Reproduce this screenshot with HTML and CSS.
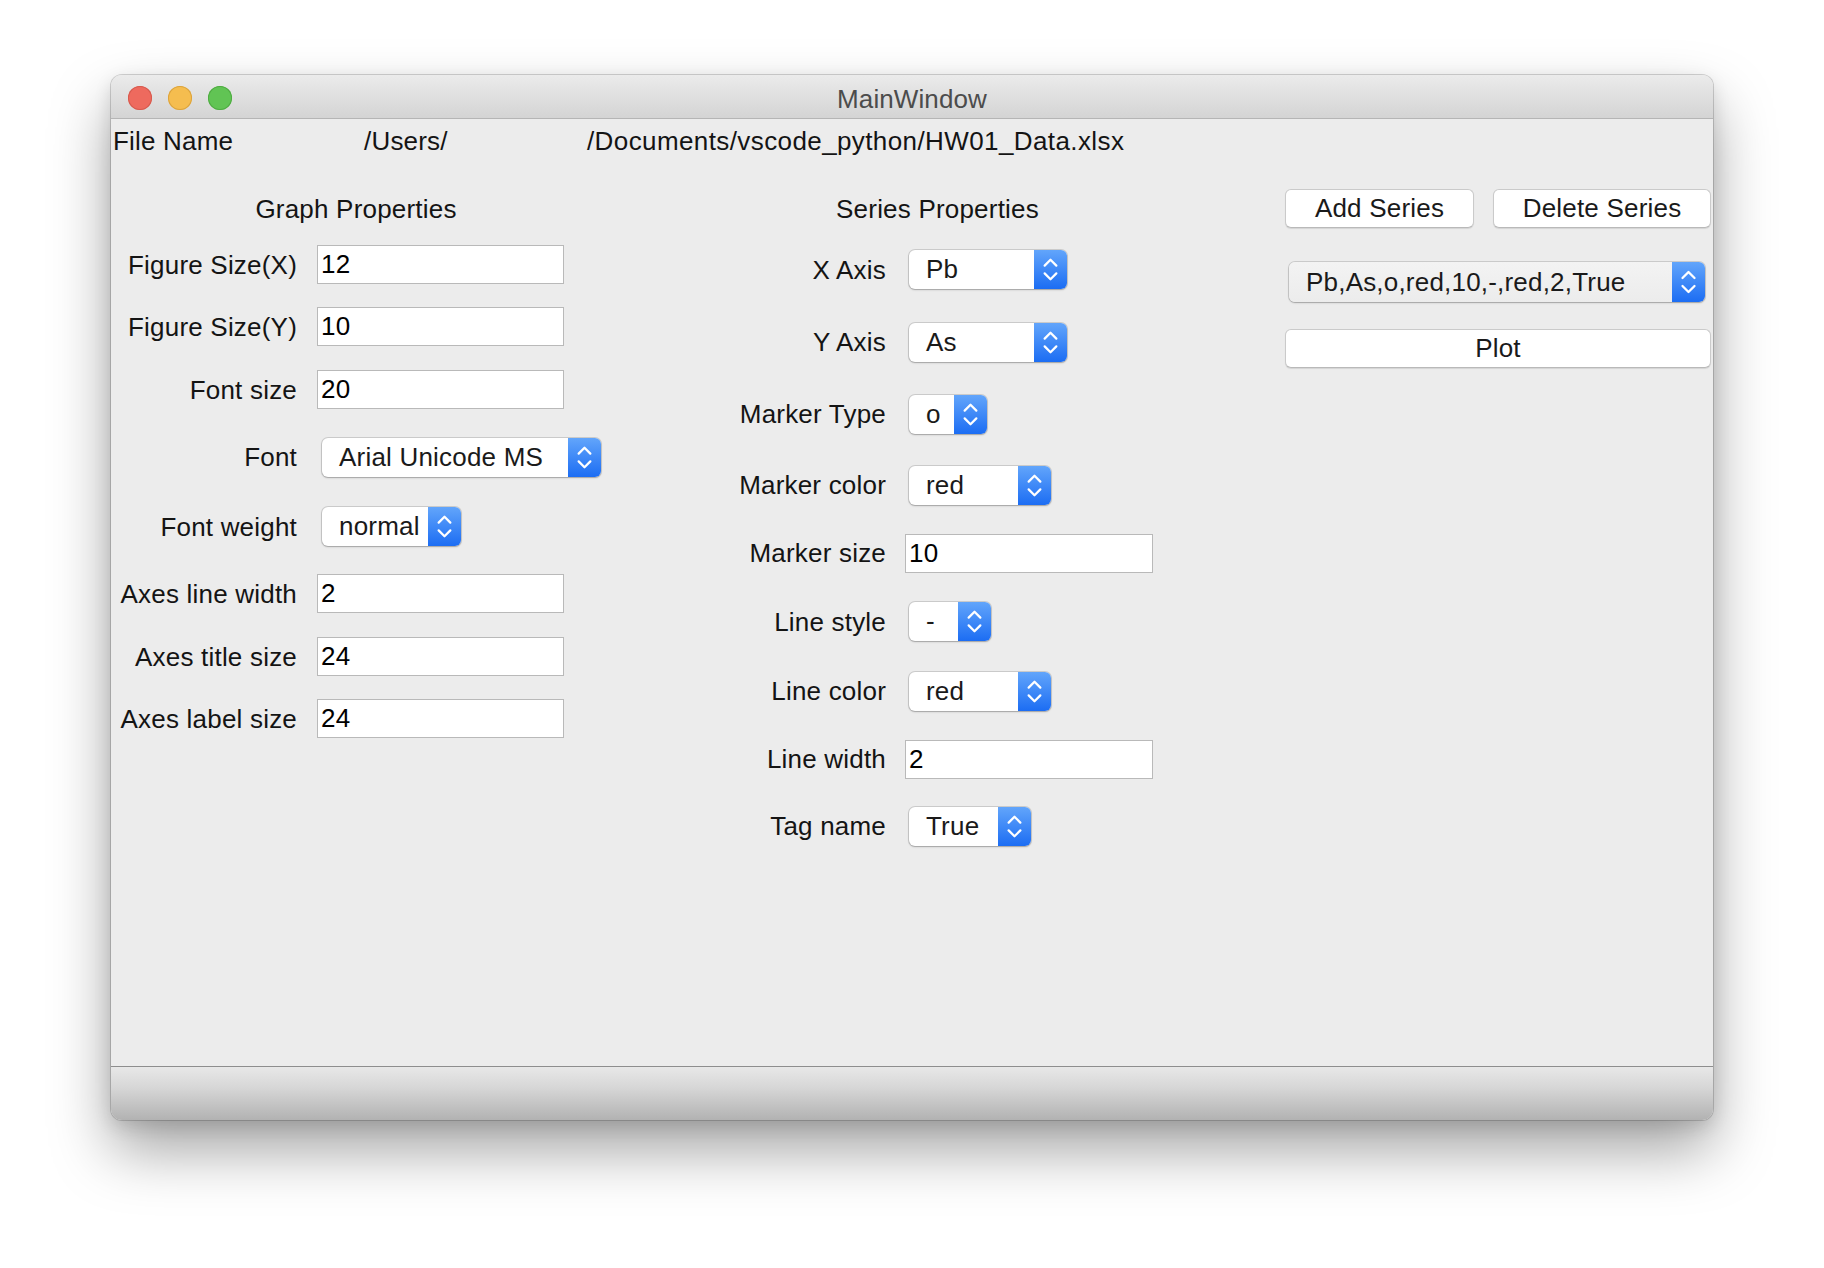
FILE: index.html
```html
<!DOCTYPE html>
<html lang="en">
<head>
<meta charset="utf-8">
<title>MainWindow</title>
<link rel="stylesheet" href="styles.css">
</head>
<body>
<div class="window">
  <div class="titlebar">
    <div class="lights">
      <span class="light light-red"></span>
      <span class="light light-yellow"></span>
      <span class="light light-green"></span>
    </div>
    <div class="title">MainWindow</div>
    <div></div>
  </div>

  <div class="main">
    <div class="filerow">
      <span class="file-label">File Name</span>
      <span class="file-user">/Users/</span>
      <span class="file-path">/Documents/vscode_python/HW01_Data.xlsx</span>
    </div>

    <div class="columns">
      <section class="col col-graph">
        <h2 class="heading">Graph Properties</h2>
        <div class="form form-graph">
          <label class="lbl">Figure Size(X)</label><div class="edit">12</div>
          <label class="lbl">Figure Size(Y)</label><div class="edit">10</div>
          <label class="lbl">Font size</label><div class="edit">20</div>
          <label class="lbl">Font</label>
          <div class="combo combo-font"><span class="combo-text">Arial Unicode MS</span><span class="combo-btn"><svg class="chev" viewBox="0 0 33 40"><path d="M10.5 16 L16.5 10 L22.5 16 M10.5 24 L16.5 30 L22.5 24"/></svg></span></div>
          <label class="lbl">Font weight</label>
          <div class="combo combo-weight"><span class="combo-text">normal</span><span class="combo-btn"><svg class="chev" viewBox="0 0 33 40"><path d="M10.5 16 L16.5 10 L22.5 16 M10.5 24 L16.5 30 L22.5 24"/></svg></span></div>
          <label class="lbl">Axes line width</label><div class="edit">2</div>
          <label class="lbl">Axes title size</label><div class="edit">24</div>
          <label class="lbl">Axes label size</label><div class="edit">24</div>
        </div>
      </section>

      <section class="col col-series">
        <h2 class="heading">Series Properties</h2>
        <div class="form form-series">
          <label class="lbl">X Axis</label>
          <div class="combo combo-axis"><span class="combo-text">Pb</span><span class="combo-btn"><svg class="chev" viewBox="0 0 33 40"><path d="M10.5 16 L16.5 10 L22.5 16 M10.5 24 L16.5 30 L22.5 24"/></svg></span></div>
          <label class="lbl">Y Axis</label>
          <div class="combo combo-axis"><span class="combo-text">As</span><span class="combo-btn"><svg class="chev" viewBox="0 0 33 40"><path d="M10.5 16 L16.5 10 L22.5 16 M10.5 24 L16.5 30 L22.5 24"/></svg></span></div>
          <label class="lbl">Marker Type</label>
          <div class="combo combo-marker"><span class="combo-text">o</span><span class="combo-btn"><svg class="chev" viewBox="0 0 33 40"><path d="M10.5 16 L16.5 10 L22.5 16 M10.5 24 L16.5 30 L22.5 24"/></svg></span></div>
          <label class="lbl">Marker color</label>
          <div class="combo combo-color"><span class="combo-text">red</span><span class="combo-btn"><svg class="chev" viewBox="0 0 33 40"><path d="M10.5 16 L16.5 10 L22.5 16 M10.5 24 L16.5 30 L22.5 24"/></svg></span></div>
          <label class="lbl">Marker size</label><div class="edit">10</div>
          <label class="lbl">Line style</label>
          <div class="combo combo-style"><span class="combo-text">-</span><span class="combo-btn"><svg class="chev" viewBox="0 0 33 40"><path d="M10.5 16 L16.5 10 L22.5 16 M10.5 24 L16.5 30 L22.5 24"/></svg></span></div>
          <label class="lbl">Line color</label>
          <div class="combo combo-color"><span class="combo-text">red</span><span class="combo-btn"><svg class="chev" viewBox="0 0 33 40"><path d="M10.5 16 L16.5 10 L22.5 16 M10.5 24 L16.5 30 L22.5 24"/></svg></span></div>
          <label class="lbl">Line width</label><div class="edit">2</div>
          <label class="lbl">Tag name</label>
          <div class="combo combo-tag"><span class="combo-text">True</span><span class="combo-btn"><svg class="chev" viewBox="0 0 33 40"><path d="M10.5 16 L16.5 10 L22.5 16 M10.5 24 L16.5 30 L22.5 24"/></svg></span></div>
        </div>
      </section>

      <section class="col col-actions">
        <div class="btn-row">
          <div class="btn btn-add">Add Series</div>
          <div class="btn btn-delete">Delete Series</div>
        </div>
        <div class="combo combo-series"><span class="combo-text">Pb,As,o,red,10,-,red,2,True</span><span class="combo-btn"><svg class="chev" viewBox="0 0 33 40"><path d="M10.5 16 L16.5 10 L22.5 16 M10.5 24 L16.5 30 L22.5 24"/></svg></span></div>
        <div class="btn btn-plot">Plot</div>
      </section>
    </div>
  </div>

  <div class="statusbar"></div>
</div>
</body>
</html>
```

FILE: styles.css
```css
* { box-sizing: border-box; }

html, body {
  margin: 0;
  padding: 0;
  background: #ffffff;
}

body {
  width: 1824px;
  height: 1268px;
  overflow: hidden;
  font-family: "Liberation Sans", Arial, sans-serif;
  font-size: 26px;
  letter-spacing: 0.2px;
  color: #141414;
}

.window {
  margin: 75px 0 0 111px;
  width: 1602px;
  height: 1045px;
  display: flex;
  flex-direction: column;
  background: #ececec;
  border-radius: 11px;
  overflow: hidden;
  box-shadow:
    0 0 0 1px rgba(0, 0, 0, 0.16),
    0 30px 60px rgba(0, 0, 0, 0.36),
    0 6px 18px rgba(0, 0, 0, 0.12);
}

/* title bar */
.titlebar {
  flex: none;
  height: 44px;
  display: grid;
  grid-template-columns: 1fr auto 1fr;
  align-items: center;
  background: linear-gradient(#ebebeb, #d4d4d4);
  border-bottom: 1px solid #b5b5b5;
}

.lights {
  display: flex;
  gap: 16px;
  padding-left: 17px;
}

.light {
  width: 24px;
  height: 24px;
  border-radius: 50%;
}

.light-red { background: #ee6a5e; box-shadow: inset 0 0 0 1px #d65a4e; }
.light-yellow { background: #f5bd4f; box-shadow: inset 0 0 0 1px #dba33d; }
.light-green { background: #61c454; box-shadow: inset 0 0 0 1px #4fab42; }

.title {
  color: #4c4c4c;
  line-height: 44px;
  padding-top: 2px;
  letter-spacing: 0.1px;
}

/* main area */
.main {
  flex: 1;
  padding-top: 6px;
}

.filerow {
  display: flex;
  height: 32px;
  line-height: 32px;
  padding-left: 2px;
  white-space: nowrap;
}

.file-label { width: 251px; }
.file-user { width: 223px; }
.file-path { letter-spacing: 0.4px; }

.columns {
  display: flex;
  align-items: flex-start;
  margin-top: 32px;
}

.col-graph { width: 490px; }
.col-series { width: 435px; margin-left: 119px; }
.col-actions { width: 426px; margin-left: 130px; }

.heading {
  margin: 0 0 8.5px;
  padding-top: 4px;
  height: 36px;
  line-height: 32px;
  font-size: 26px;
  font-weight: normal;
  text-align: center;
  white-space: nowrap;
}

.form {
  display: grid;
  align-items: center;
}

.form-graph {
  grid-template-columns: 186px 1fr;
  column-gap: 20px;
  grid-template-rows: 62px 62px 64.75px 69.75px 69.5px 64.5px 61.75px 61.5px;
}

.form-series {
  grid-template-columns: 166px 1fr;
  column-gap: 19px;
  grid-template-rows: 72.5px 72px 72.25px 69.5px 67px 69.75px 69px 67px 67.5px;
}

.lbl {
  text-align: right;
  line-height: 32px;
  white-space: nowrap;
}

/* line edits */
.edit {
  height: 39px;
  background: #ffffff;
  border: 1px solid #b9b9b9;
  padding-left: 3px;
  line-height: 37px;
  color: #000;
}

.form-graph .edit { width: 247px; }
.form-series .edit { width: 248px; }

/* combo boxes */
.combo {
  display: flex;
  height: 39px;
  background: #ffffff;
  border-radius: 6px;
  box-shadow:
    0 0 0 1px rgba(0, 0, 0, 0.13),
    0 1px 2px rgba(0, 0, 0, 0.22);
}

.form .combo { justify-self: start; }
.form-graph .combo { margin-left: 5px; }
.form-series .combo { margin-left: 4px; }

.combo-text {
  flex: 1;
  padding-left: 17px;
  line-height: 39px;
  white-space: nowrap;
  overflow: hidden;
  color: #1a1a1a;
}

.combo-btn {
  flex: none;
  width: 33px;
  height: 100%;
  border-radius: 0 6px 6px 0;
  background: linear-gradient(#62a5fb, #1c6df3);
  display: flex;
}

.chev {
  width: 33px;
  height: 39px;
  fill: none;
  stroke: #ffffff;
  stroke-width: 2.3;
  stroke-linecap: round;
  stroke-linejoin: round;
}

.combo-font { width: 279px; }
.combo-weight { width: 139px; }
.combo-axis { width: 158px; }
.combo-marker { width: 78px; }
.combo-color { width: 142px; }
.combo-style { width: 82px; }
.combo-tag { width: 122px; }

.combo-series {
  width: 416px;
  height: 40px;
  margin: 34px 4px 0;
  background: linear-gradient(#f3f3f3, #ececec);
}

.combo-series .combo-text { line-height: 40px; }
.combo-series .chev { height: 40px; }

/* push buttons */
.btn-row {
  display: flex;
  gap: 19px;
}

.btn {
  height: 39px;
  background: #ffffff;
  border: 1px solid #cacaca;
  border-bottom-color: #b9b9b9;
  border-radius: 6px;
  box-shadow: 0 1px 1px rgba(0, 0, 0, 0.1);
  text-align: center;
  line-height: 37px;
  color: #1a1a1a;
  white-space: nowrap;
}

.btn-add { width: 189px; }
.btn-delete { width: 218px; }
.btn-plot { margin-top: 27px; }

/* bottom bar */
.statusbar {
  flex: none;
  height: 54px;
  border-top: 1px solid #8e8e8e;
  background: linear-gradient(#e8e8e8, #d6d6d6 40%, #b2b2b2);
}
```
